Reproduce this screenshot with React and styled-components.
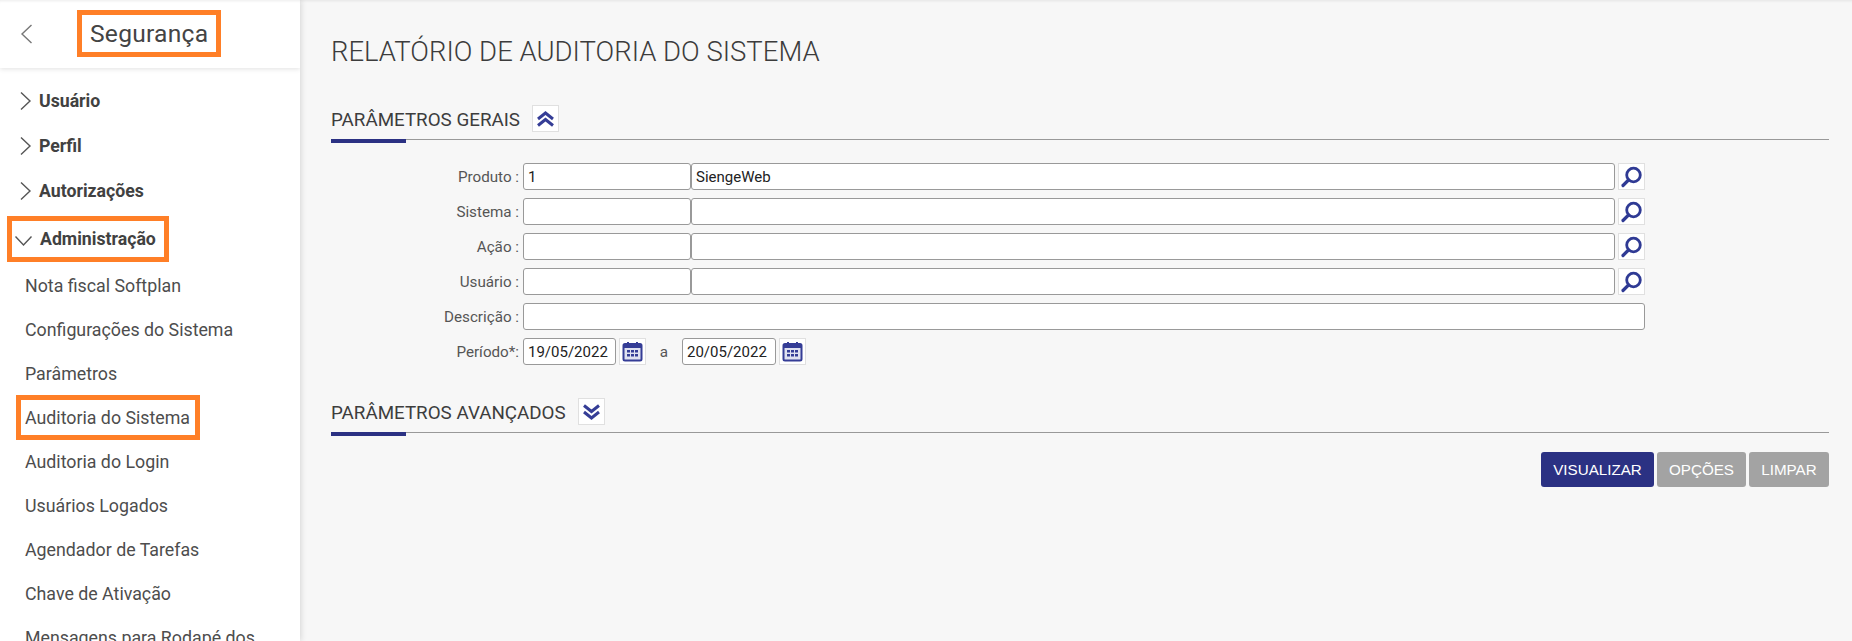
import React from "react";
import styled, { createGlobalStyle } from "styled-components";

const NAVY = "#2b3183";

const GlobalStyle = createGlobalStyle`
  html, body { margin: 0; padding: 0; height: 100%; overflow: hidden; }
  body { background: #f7f7f7; font-family: Roboto, "Liberation Sans", sans-serif; }
`;

const Page = styled.div`
  display: flex;
  width: 1852px;
  height: 641px;
  overflow: hidden;
`;

const Sidebar = styled.aside`
  width: 300px;
  flex: none;
  height: 641px;
  overflow: hidden;
  background: #fff;
  box-shadow: 1px 0 6px rgba(0, 0, 0, 0.14);
  position: relative;
  z-index: 1;
`;

const SideHeader = styled.header`
  height: 68px;
  display: flex;
  align-items: center;
  padding-left: 20px;
  box-shadow: 0 1px 5px rgba(0, 0, 0, 0.12), inset 0 3px 3px -2px rgba(0, 0, 0, 0.08);
  color: #666;
`;

const Highlight = styled.span`
  position: relative;
  &::after {
    content: "";
    position: absolute;
    top: ${(p) => p.$top}px;
    bottom: ${(p) => p.$bottom}px;
    left: ${(p) => p.$left}px;
    right: ${(p) => p.$right}px;
    border: 5px solid #ff7f27;
    pointer-events: none;
  }
`;

const SideTitle = styled.h2`
  margin: 0 0 0 57px;
  font-size: 24.6px;
  line-height: 28px;
  font-weight: 400;
  color: #444;
  letter-spacing: 0.25px;
`;

const Menu = styled.nav`
  padding-top: 10px;
`;

const Group = styled.div`
  height: 45px;
  display: flex;
  align-items: center;
  padding-left: 19px;
  gap: 6px;
  font-size: 17.7px;
  font-weight: 700;
  color: #414141;
  svg { flex: none; color: #555; }
`;

const OpenGroup = styled(Group)`
  height: 51px;
  padding-left: 14px;
  gap: 7px;
  svg { margin-top: 5px; }
`;

const SubItem = styled.div`
  height: 44px;
  line-height: 44px;
  padding-left: 25px;
  font-size: 17.8px;
  color: #4d4d4d;
  white-space: nowrap;
`;

const Main = styled.main`
  flex: 1;
  padding: 0 23px 0 31px;
  box-shadow: inset 0 3px 3px -2px rgba(0, 0, 0, 0.08);
`;

const Title = styled.h1`
  margin: 0;
  padding-top: 36px;
  font-size: 27.5px;
  line-height: 32px;
  font-weight: 300;
  color: #3c3c3c;
`;

const SectionHead = styled.div`
  margin-top: ${(p) => p.$top}px;
  height: 34px;
  display: flex;
  align-items: flex-start;
  gap: 12px;
  border-bottom: 1px solid #999;
  position: relative;
  &::after {
    content: "";
    position: absolute;
    left: 0;
    bottom: -4px;
    width: 75px;
    height: 4px;
    background: ${NAVY};
  }
`;

const SectionTitle = styled.h3`
  margin: 0;
  font-size: 18.8px;
  line-height: 31px;
  font-weight: 400;
  color: #3d3d3d;
`;

const IconButton = styled.button`
  width: 27px;
  height: 27px;
  flex: none;
  padding: 0;
  display: flex;
  align-items: center;
  justify-content: center;
  background: #fff;
  border: 1px solid #e0e0e0;
  color: ${NAVY};
`;

const Form = styled.div`
  margin-top: 23px;
  display: grid;
  grid-template-columns: 188px auto;
  column-gap: 4px;
  row-gap: 8px;
  width: 1314px;
`;

const Label = styled.label`
  height: 27px;
  line-height: 29px;
  text-align: right;
  font-size: 15.2px;
  color: #555;
  white-space: nowrap;
`;

const Fields = styled.div`
  display: flex;
  align-items: center;
  height: 27px;
`;

const Input = styled.input`
  box-sizing: border-box;
  height: 27px;
  width: ${(p) => p.$w};
  flex: ${(p) => (p.$grow ? 1 : "none")};
  min-width: 0;
  padding: 1px 4px 0;
  border: 1px solid #999;
  border-radius: 3px;
  background: #fff;
  font-family: Roboto, sans-serif;
  font-size: 15px;
  color: #222;
  outline: none;
`;

const SearchButton = styled(IconButton)`
  margin-left: 3px;
`;

const Sep = styled.span`
  width: 36px;
  text-align: center;
  font-size: 15.2px;
  color: #555;
`;

const Actions = styled.div`
  margin-top: 19px;
  display: flex;
  justify-content: flex-end;
  gap: 3px;
`;

const ActionButton = styled.button`
  box-sizing: border-box;
  width: ${(p) => p.$w}px;
  height: 35px;
  padding: 0;
  border: none;
  border-radius: 3px;
  background: ${(p) => (p.$primary ? NAVY : "#a3a3a3")};
  color: #fff;
  font-family: "Liberation Sans", Arial, sans-serif;
  font-size: 15.2px;
`;

const ChevronRight = () => (
  <svg width="14" height="20" viewBox="0 0 14 20" fill="none" stroke="currentColor" strokeWidth="1.4">
    <path d="M2 1.5 L11 10 L2 18.5" />
  </svg>
);

const ChevronDown = () => (
  <svg width="19" height="12" viewBox="0 0 19 12" fill="none" stroke="currentColor" strokeWidth="1.4">
    <path d="M1.5 1.5 L9.5 10 L17.5 1.5" />
  </svg>
);

const BackArrow = () => (
  <svg width="13" height="20" viewBox="0 0 13 20" fill="none" stroke="#777" strokeWidth="1.4">
    <path d="M11.5 1 L2 10 L11.5 19" />
  </svg>
);

const DoubleUp = () => (
  <svg width="19" height="16" viewBox="0 0 19 16" fill="none" stroke="#353d96" strokeWidth="3">
    <path d="M2 8 L9.5 2 L17 8" />
    <path d="M2 14.5 L9.5 8.5 L17 14.5" />
  </svg>
);

const DoubleDown = () => (
  <svg width="19" height="16" viewBox="0 0 19 16" fill="none" stroke="#353d96" strokeWidth="3">
    <path d="M2 1.5 L9.5 7.5 L17 1.5" />
    <path d="M2 8 L9.5 14 L17 8" />
  </svg>
);

const SearchIcon = () => (
  <svg width="23" height="23" viewBox="0 0 23 23" fill="none" stroke="#2f3a94">
    <circle cx="13.5" cy="10" r="6.8" strokeWidth="2.8" />
    <path d="M8.5 15 L3 20.5" strokeWidth="3.2" strokeLinecap="round" />
  </svg>
);

const CalendarIcon = () => (
  <svg width="21" height="21" viewBox="0 0 21 21">
    <rect x="1.5" y="3" width="18" height="16.5" rx="1.5" fill="#dfe1f0" stroke="#353d96" strokeWidth="2" />
    <rect x="1" y="3" width="19" height="4" fill="#353d96" />
    <rect x="5" y="1" width="2" height="3" fill="#353d96" />
    <rect x="14" y="1" width="2" height="3" fill="#353d96" />
    <g fill="#353d96">
      <rect x="5" y="9" width="3" height="2.5" />
      <rect x="9" y="9" width="3" height="2.5" />
      <rect x="13" y="9" width="3" height="2.5" />
      <rect x="5" y="13" width="3" height="2.5" />
      <rect x="9" y="13" width="3" height="2.5" />
      <rect x="13" y="13" width="3" height="2.5" />
    </g>
  </svg>
);

const groups = ["Usuário", "Perfil", "Autorizações"];
const adminItems = [
  "Nota fiscal Softplan",
  "Configurações do Sistema",
  "Parâmetros",
  "Auditoria do Sistema",
  "Auditoria do Login",
  "Usuários Logados",
  "Agendador de Tarefas",
  "Chave de Ativação",
  "Mensagens para Rodapé dos",
];

const lookups = [
  { label: "Produto :", code: "1", name: "SiengeWeb" },
  { label: "Sistema :", code: "", name: "" },
  { label: "Ação :", code: "", name: "" },
  { label: "Usuário :", code: "", name: "" },
];

export default function App() {
  return (
    <Page>
      <GlobalStyle />
      <Sidebar>
        <SideHeader>
          <BackArrow />
          <SideTitle>
            <Highlight $top={-9} $bottom={-9} $left={-13} $right={-13}>Segurança</Highlight>
          </SideTitle>
        </SideHeader>
        <Menu>
          {groups.map((g) => (
            <Group key={g}>
              <ChevronRight />
              {g}
            </Group>
          ))}
          <OpenGroup>
            <ChevronDown />
            <Highlight $top={-13} $bottom={-13} $left={-33} $right={-13}>Administração</Highlight>
          </OpenGroup>
          {adminItems.map((item) => (
            <SubItem key={item}>
              {item === "Auditoria do Sistema" ? (
                <Highlight $top={-12} $bottom={-12} $left={-9} $right={-10}>{item}</Highlight>
              ) : (
                item
              )}
            </SubItem>
          ))}
        </Menu>
      </Sidebar>
      <Main>
        <Title>RELATÓRIO DE AUDITORIA DO SISTEMA</Title>
        <SectionHead $top={37}>
          <SectionTitle>PARÂMETROS GERAIS</SectionTitle>
          <IconButton><DoubleUp /></IconButton>
        </SectionHead>
        <Form>
          {lookups.map((row) => (
            <React.Fragment key={row.label}>
              <Label>{row.label}</Label>
              <Fields>
                <Input $w="168px" defaultValue={row.code} />
                <Input $grow defaultValue={row.name} />
                <SearchButton><SearchIcon /></SearchButton>
              </Fields>
            </React.Fragment>
          ))}
          <Label>Descrição :</Label>
          <Fields>
            <Input $grow />
          </Fields>
          <Label>Período*:</Label>
          <Fields>
            <Input $w="93px" defaultValue="19/05/2022" />
            <SearchButton><CalendarIcon /></SearchButton>
            <Sep>a</Sep>
            <Input $w="94px" defaultValue="20/05/2022" />
            <SearchButton><CalendarIcon /></SearchButton>
          </Fields>
        </Form>
        <SectionHead $top={33}>
          <SectionTitle>PARÂMETROS AVANÇADOS</SectionTitle>
          <IconButton><DoubleDown /></IconButton>
        </SectionHead>
        <Actions>
          <ActionButton $primary $w={113}>VISUALIZAR</ActionButton>
          <ActionButton $w={89}>OPÇÕES</ActionButton>
          <ActionButton $w={80}>LIMPAR</ActionButton>
        </Actions>
      </Main>
    </Page>
  );
}
